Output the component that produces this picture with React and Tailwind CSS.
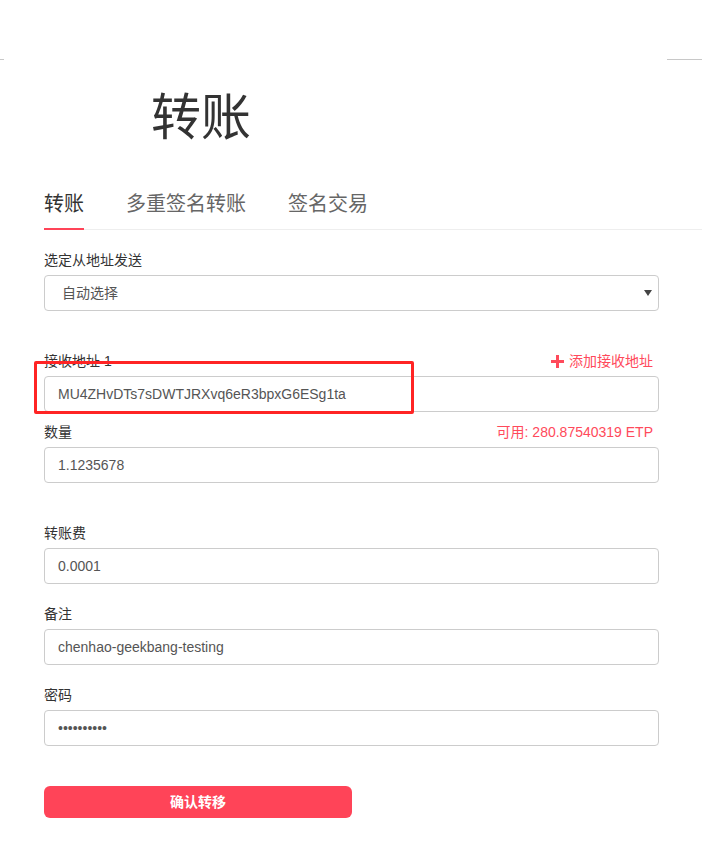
import React from "react";

const RED = "text-[#ff4a5b]";

function Field({ label, right, children, className = "" }) {
  return (
    <div className={"relative " + className}>
      <div className="flex items-center justify-between h-[20px] mb-[5px]">
        <span className="text-[14px] leading-[20px] text-[#333]">{label}</span>
        {right}
      </div>
      {children}
    </div>
  );
}

function Box({ children }) {
  return (
    <div className="h-[36px] border border-[#ccc] rounded-[4px] flex items-center text-[14px] text-[#555] pl-[13px]">
      {children}
    </div>
  );
}

export default function App() {
  return (
    <div className="w-[702px] h-[865px] bg-white font-['Liberation_Sans','Noto_Sans_CJK_SC',sans-serif] overflow-hidden">
      <div className="h-[59px]" />
      <div className="flex justify-between">
        <div className="w-[4px] h-px bg-[#c8c8c8]" />
        <div className="w-[35px] h-px bg-[#c8c8c8]" />
      </div>
      <h1 className="ml-[151px] mt-[29px] text-[50px] leading-[58px] text-[#333] font-normal">转账</h1>

      <div className="ml-[44px] mt-[43px] flex border-b border-[#eee] gap-[42px]">
        <div className="text-[20px] leading-[28px] text-[#333] pb-[10px] border-b-2 border-[#ff4458] -mb-px">转账</div>
        <div className="text-[20px] leading-[28px] text-[#666] pb-[10px]">多重签名转账</div>
        <div className="text-[20px] leading-[28px] text-[#666] pb-[10px]">签名交易</div>
      </div>

      <div className="pl-[44px] pr-[43px]">
        <Field label="选定从地址发送" className="mt-[20px]">
          <div className="h-[36px] border border-[#ccc] rounded-[4px] flex items-center justify-between pl-[17px] pr-[6px] text-[14px] text-[#555]">
            <span>自动选择</span>
            <svg width="8" height="6" viewBox="0 0 8 6"><path d="M0 0h8L4 6z" fill="#444" /></svg>
          </div>
        </Field>

        <Field
          label="接收地址 1"
          className="mt-[40px]"
          right={
            <span className={"flex items-center gap-[5px] text-[14px] leading-[20px] mr-[6px] " + RED}>
              <svg width="13" height="13" viewBox="0 0 13 13"><path d="M5 0h3v5h5v3H8v5H5V8H0V5h5z" fill="#ff4a5b" /></svg>
              添加接收地址
            </span>
          }
        >
          <Box>MU4ZHvDTs7sDWTJRXvq6eR3bpxG6ESg1ta</Box>
          <div className="absolute left-[-10px] top-[10px] w-[380px] h-[53px] border-[3px] border-[#ff2424] rounded-[2px] pointer-events-none" />
        </Field>

        <Field
          label="数量"
          className="mt-[10px]"
          right={<span className={"text-[14px] leading-[20px] mr-[6px] " + RED}>可用: 280.87540319 ETP</span>}
        >
          <Box>1.1235678</Box>
        </Field>

        <Field label="转账费" className="mt-[40px]">
          <Box>0.0001</Box>
        </Field>

        <Field label="备注" className="mt-[20px]">
          <Box>chenhao-geekbang-testing</Box>
        </Field>

        <Field label="密码" className="mt-[20px]">
          <Box>••••••••••</Box>
        </Field>

        <button className="mt-[40px] w-[308px] h-[32px] rounded-[6px] bg-[#ff4458] text-white text-[14px] font-bold flex items-center justify-center">
          确认转移
        </button>
      </div>
    </div>
  );
}
